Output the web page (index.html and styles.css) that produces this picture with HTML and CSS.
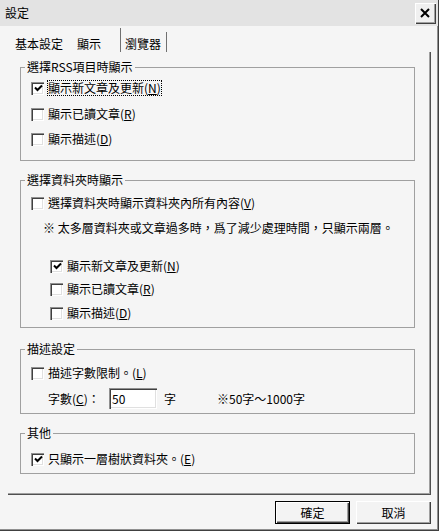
FILE: index.html
```html
<!DOCTYPE html>
<html lang="zh-Hant">

<head>
    <meta charset="UTF-8">
    <title>設定</title>
    <link rel="stylesheet" href="styles.css">
</head>

<body>

    <div class="window">
        <div class="titlebar">
            <span class="title">設定</span>
            <button type="button" class="close">
                <svg width="11" height="10" viewBox="0 0 11 10"><path d="M1 1 L9 9 M9 1 L1 9" stroke="#000" stroke-width="2"/></svg>
            </button>
        </div>

        <div class="tabs">
            <span class="tab tab-basic">基本設定</span>
            <span class="tab tab-show active">顯示</span>
            <span class="tab tab-browser">瀏覽器</span>
        </div>

        <div class="panel">
            <fieldset class="group group-rss">
                <legend>選擇RSS項目時顯示</legend>
                <div class="row r1">
                    <span class="check on"><svg width="9" height="9" viewBox="0 0 9 9"><path d="M1 3.5 L3.5 6 L8 1.5" stroke="#000" stroke-width="2" fill="none"/></svg></span>
                    <span class="label focus">顯示新文章及更新(<u>N</u>)</span>
                </div>
                <div class="row r2">
                    <span class="check"></span>
                    <span class="label">顯示已讀文章(<u>R</u>)</span>
                </div>
                <div class="row r3">
                    <span class="check"></span>
                    <span class="label">顯示描述(<u>D</u>)</span>
                </div>
            </fieldset>

            <fieldset class="group group-folder">
                <legend>選擇資料夾時顯示</legend>
                <div class="row r1">
                    <span class="check"></span>
                    <span class="label">選擇資料夾時顯示資料夾內所有內容(<u>V</u>)</span>
                </div>
                <div class="row note">※ 太多層資料夾或文章過多時，爲了減少處理時間，只顯示兩層。</div>
                <div class="row sub s1">
                    <span class="check on"><svg width="9" height="9" viewBox="0 0 9 9"><path d="M1 3.5 L3.5 6 L8 1.5" stroke="#000" stroke-width="2" fill="none"/></svg></span>
                    <span class="label">顯示新文章及更新(<u>N</u>)</span>
                </div>
                <div class="row sub s2">
                    <span class="check"></span>
                    <span class="label">顯示已讀文章(<u>R</u>)</span>
                </div>
                <div class="row sub s3">
                    <span class="check"></span>
                    <span class="label">顯示描述(<u>D</u>)</span>
                </div>
            </fieldset>

            <fieldset class="group group-desc">
                <legend>描述設定</legend>
                <div class="row r1">
                    <span class="check"></span>
                    <span class="label">描述字數限制。(<u>L</u>)</span>
                </div>
                <div class="row count">
                    <span class="count-label">字數(<u>C</u>)：</span>
                    <input type="text" class="count-input" value="50">
                    <span class="unit">字</span>
                    <span class="range">※50字～1000字</span>
                </div>
            </fieldset>

            <fieldset class="group group-other">
                <legend>其他</legend>
                <div class="row r1">
                    <span class="check on"><svg width="9" height="9" viewBox="0 0 9 9"><path d="M1 3.5 L3.5 6 L8 1.5" stroke="#000" stroke-width="2" fill="none"/></svg></span>
                    <span class="label">只顯示一層樹狀資料夾。(<u>E</u>)</span>
                </div>
            </fieldset>
        </div>

        <div class="footer">
            <button type="button" class="btn default">確定</button>
            <button type="button" class="btn">取消</button>
        </div>
    </div>

</body>

</html>
```

FILE: styles.css
```css
body {
    margin: 0;
    background-color: #fff;
    font-family: "Noto Sans CJK TC", "Noto Sans", sans-serif;
    font-size: 12px;
    color: #000;
}

.window {
    width: 439px;
    height: 531px;
    box-sizing: border-box;
    background-color: #f5f5f5;
    border-right: 1px solid #404040;
    border-bottom: 1px solid #404040;
    box-shadow: inset -1px -1px #909090;
    display: flex;
    flex-direction: column;
}

.titlebar {
    height: 26px;
    flex: none;
    background-color: #e3e3e3;
    display: flex;
    align-items: center;
    padding: 0 2px 0 5px;
}

.title {
    flex: 1;
    line-height: 14px;
}

.close {
    width: 21px;
    height: 21px;
    padding: 0;
    margin: 0;
    border: none;
    background-color: #f0f0f0;
    box-shadow: inset 1px 1px #fff, inset -1px -1px #404040, inset -2px -2px #a0a0a0;
    display: flex;
    justify-content: center;
    align-items: center;
}

/* tab strip */
.tabs {
    height: 26px;
    flex: none;
    display: flex;
    align-items: flex-end;
    padding-left: 10px;
}

.tab {
    height: 20px;
    box-sizing: border-box;
    padding-top: 5px;
    line-height: 14px;
}

.tab-basic {
    width: 60px;
    padding-left: 5px;
}

.tab-show {
    width: 51px;
    height: 24px;
    padding-top: 9px;
    padding-left: 7px;
    border-right: 1px solid #707070;
}

.tab-browser {
    width: 46px;
    padding-left: 4px;
    border-right: 1px solid #707070;
}

.panel {
    height: 443px;
    flex: none;
    box-sizing: border-box;
    margin: 0 7px 0 8px;
    padding: 8px 15px 0 12px;
    border-right: 1px solid #505050;
    border-bottom: 1px solid #505050;
    box-shadow: inset -1px -1px #a0a0a0;
}

/* group boxes */
.group {
    margin: 0;
    padding: 0;
    border: 1px solid #a0a0a0;
    min-width: 0;
}

.group legend {
    margin-left: 4px;
    padding: 0 2px;
    line-height: 14px;
}

.group-folder {
    margin-top: 12px;
    padding-bottom: 6px;
}

.group-desc {
    margin-top: 14px;
    padding-bottom: 4px;
}

.group-other {
    margin-top: 12px;
    padding-bottom: 6px;
}

.group-rss {
    padding-bottom: 13px;
}

.row {
    display: flex;
    align-items: center;
    height: 16px;
    padding-left: 10px;
    line-height: 14px;
    white-space: nowrap;
}

.group-rss .r1 { margin-top: 6px; }
.group-rss .r2 { margin-top: 10px; }
.group-rss .r3 { margin-top: 9px; }

.group-folder .r1 { margin-top: 8px; }
.group-folder .note { margin-top: 9px; padding-left: 22px; }
.group-folder .s1 { margin-top: 22px; }
.group-folder .s2 { margin-top: 7px; }
.group-folder .s3 { margin-top: 8px; }
.sub { padding-left: 29px; }

.group-desc .r1 { margin-top: 9px; }

.group-other .r1 { margin-top: 11px; }

.check {
    width: 13px;
    height: 13px;
    flex: none;
    box-sizing: border-box;
    margin-right: 4px;
    background-color: #fff;
    box-shadow: inset 1px 1px #909090, inset 2px 2px #404040, inset -1px -1px #fff, inset -2px -2px #e0e0e0;
    display: flex;
    justify-content: center;
    align-items: center;
}

.check svg {
    margin: 1px 0 0 1px;
}

.label u {
    text-decoration: underline;
}

.focus {
    outline: 1px dotted #000;
}

/* 字數 row */
.count {
    height: 21px;
    margin-top: 7px;
    padding-left: 27px;
}

.count-label {
    width: 61px;
    flex: none;
}

.count-input {
    width: 48px;
    height: 21px;
    box-sizing: border-box;
    margin: 0 7px 0 0;
    padding: 0 0 0 3px;
    border: none;
    background-color: #fff;
    box-shadow: inset 1px 1px #909090, inset 2px 2px #404040, inset -1px -1px #fff, inset -2px -2px #e0e0e0;
    font-family: inherit;
    font-size: 12px;
}

.range {
    margin-left: 41px;
}

/* buttons */
.footer {
    flex: 1;
    display: flex;
    justify-content: flex-end;
    align-items: flex-start;
    padding: 6px 7px 0 0;
    gap: 6px;
}

.btn {
    width: 75px;
    height: 23px;
    margin: 0;
    padding: 0;
    border: none;
    background-color: #f3f3f3;
    box-shadow: inset 1px 1px #fff, inset -1px -1px #404040, inset -2px -2px #a0a0a0;
    font-family: inherit;
    font-size: 12px;
    color: #000;
}

.btn.default {
    border: 1px solid #000;
}
```
